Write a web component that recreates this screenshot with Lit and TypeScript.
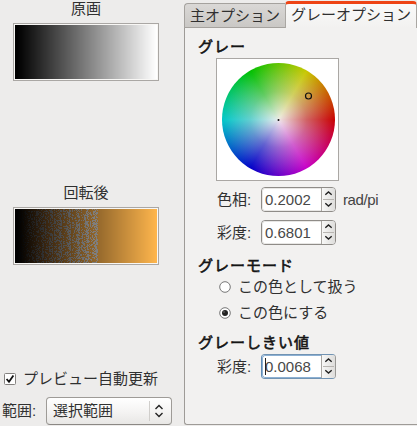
import { LitElement, html, svg, css } from "lit";
import { customElement, property } from "lit/decorators.js";

@customElement("spin-box")
class SpinBox extends LitElement {
  @property() value = "";
  @property({ type: Boolean, reflect: true }) active = false;

  static styles = css`
    :host { display: flex; box-sizing: border-box; width: 75px; height: 25px; border: 1px solid #8f8c88; border-radius: 4px; overflow: hidden; background: #fff; }
    .value { flex: 1; display: flex; align-items: center; font-size: 15px; color: #484848; border: 1px solid #e8e7e5; border-right: 0; border-radius: 3px 0 0 3px; padding-left: 2px; }
    .steps { width: 13px; border-left: 1px solid #a9a6a2; background: linear-gradient(90deg, #f8f8f7, #dedddb); }
    svg { display: block; }
    :host([active]) { border-color: #7193b3 #9a9996 #7193b3 #5e8ab5; }
    :host([active]) .value { border: 1px solid #8cb0d3; border-right: 0; position: relative; }
    .caret { position: absolute; left: 2px; top: 2px; width: 1px; height: 17px; background: #222; }
  `;

  render() {
    return html`
      <div class="value">${this.active ? html`<i class="caret"></i>` : ""}${this.value}</div>
      <div class="steps">
        <svg width="13" height="23" viewBox="0 0 13 23" fill="none">
          <path d="M1 11.5H12" stroke="#b8b5b1" />
          <path d="M3.3 6.8L6.5 3.9L9.7 6.8M3.3 15.2L6.5 18.1L9.7 15.2" stroke="#222" stroke-width="1.4" />
        </svg>
      </div>`;
  }
}

@customElement("gradient-preview")
class GradientPreview extends LitElement {
  @property({ type: Boolean }) rotated = false;

  static styles = css`
    :host { display: block; box-sizing: border-box; width: 146px; height: 58px; border: 1px solid #aaa7a4; padding: 1px; background: #f8f7f5; }
    canvas { display: block; width: 142px; height: 54px; }
  `;

  firstUpdated() {
    const canvas = this.renderRoot.querySelector("canvas")!;
    const ctx = canvas.getContext("2d")!;
    const image = ctx.createImageData(142, 54);
    let seed = 7321;
    const random = () => {
      seed = (seed * 1103515245 + 12345) % 2147483648;
      return seed / 2147483648;
    };
    for (let x = 0; x < 142; x++) {
      const v = Math.max(0, (x - 2) / 139) * 255;
      // Dithered greys fall in and out of the threshold in vertical bands.
      const share = x % 9 === 2 ? 0.12 : x < 20 ? 0.25 : 0.46 + 0.16 * Math.sin(x * 0.72);
      for (let y = 0; y < 54; y++) {
        const grey = !this.rotated || (x < 83 && random() < share);
        const n = this.rotated && grey ? Math.min(v * 0.85 + 8, 126) * Math.min(1, x / 14) : v;
        const rgb = grey ? [n, n, n] : [v * 0.97 + 6 * Math.min(1, x / 30), v * 0.71, v * 0.3];
        image.data.set([rgb[0], rgb[1], rgb[2], 255], (y * 142 + x) * 4);
      }
    }
    ctx.putImageData(image, 0, 0);
  }

  render() {
    return html`<canvas width="142" height="54"></canvas>`;
  }
}

@customElement("app-root")
class AppRoot extends LitElement {
  static styles = css`
    :host { display: flex; box-sizing: border-box; width: 417px; height: 426px; overflow: hidden; background: #edeceb; color: #303030; font: 15px/20px "Liberation Sans", "Noto Sans CJK JP", sans-serif; white-space: nowrap; }
    .side { width: 184px; flex: none; display: flex; flex-direction: column; }
    .figure { width: 146px; margin-left: 13px; display: flex; flex-direction: column; align-items: center; height: 184px; }
    .figure gradient-preview { margin-top: 5px; }
    .figure .caption { height: 18px; line-height: 18px; }
    .auto { display: flex; align-items: center; height: 20px; gap: 7px; padding-left: 4px; margin-top: 1px; }
    .range { display: flex; align-items: center; gap: 11px; padding-left: 2px; margin-top: 8px; }
    .range .name { width: 33px; }
    .combo { display: flex; align-items: center; box-sizing: border-box; width: 126px; height: 28px; border: 1px solid #9e9b97; border-bottom-color: #8b8884; border-radius: 4px; background: linear-gradient(#fff, #f4f3f2 55%, #e8e7e5); padding-left: 6px; }
    .combo .choice { flex: 1; }
    .combo .arrows { border-left: 1px solid #d0cecb; width: 21px; height: 20px; }
    svg { display: block; }
    .book { flex: 1; min-width: 0; display: flex; flex-direction: column; }
    .tabs { display: flex; align-items: flex-end; height: 28px; }
    .tab { box-sizing: border-box; width: 101px; height: 25px; border: 1px solid #a5a29e; border-right: 0; border-radius: 4px 0 0 0; background: linear-gradient(#dad8d6, #cac8c5); padding-left: 5px; line-height: 23px; }
    .tab.on { width: 132px; height: 27px; border: 1px solid #aaa7a3; border-top: 3px solid #ee4415; border-bottom: 0; border-radius: 4px 4px 0 0; background: linear-gradient(#fafaf9, #f2f1f0); padding-left: 5px; line-height: 21px; }
    .page { box-sizing: border-box; height: 397px; border-left: 1px solid #9e9b97; border-bottom: 1px solid #9e9b97; border-radius: 0 0 0 3px; background: #f2f1f0; padding: 9px 0 0 13px; }
    .heading { height: 20px; letter-spacing: 1px; color: #151515; -webkit-text-stroke: 0.6px #151515; }
    .wheel { box-sizing: border-box; width: 123px; height: 123px; margin: 1px 0 0 18px; border: 1px solid #aaa7a4; background: #fff; padding: 4px 4px 3px 5px; }
    .disc { position: relative; width: 113px; height: 113px; border-radius: 50%; background: radial-gradient(circle closest-side, rgba(240, 238, 238, 0.97), rgba(218, 218, 218, 0.45) 50%, rgba(200, 200, 200, 0) 100%), conic-gradient(from 90deg, #c80000, #c800c8 60deg, #0000c8 120deg, #00c8c8 180deg, #00c000 240deg, #c8c800 300deg, #c80000); }
    .disc svg { position: absolute; inset: 0; }
    .field { display: flex; align-items: center; margin-left: 19px; height: 25px; }
    .field .name { width: 44px; }
    .unit { margin-left: 7px; letter-spacing: -0.4px; color: #444; }
    .hue { margin-top: 6px; }
    .chroma { margin-top: 8px; margin-bottom: 11px; }
    .option { display: flex; align-items: center; gap: 7px; margin-left: 21px; height: 26px; }
    .first { height: 21px; }
    .second { height: 31px; }
    .threshold { margin-top: 5px; }
    .limit { margin-top: 1px; }
  `;

  radio(on: boolean) {
    return html`<svg width="12" height="12" viewBox="0 0 12 12">
      <circle cx="6" cy="6" r="5.3" fill="#fff" stroke="#777" />
      ${on ? svg`<circle cx="6" cy="6" r="3" fill="#222" /><circle cx="5" cy="5" r=".8" fill="#777" />` : ""}
    </svg>`;
  }

  render() {
    return html`
      <div class="side">
        <div class="figure"><div class="caption">原画</div><gradient-preview></gradient-preview></div>
        <div class="figure"><div class="caption">回転後</div><gradient-preview rotated></gradient-preview></div>
        <div class="auto">
          <svg width="12" height="12" viewBox="0 0 12 12">
            <rect x=".5" y=".5" width="11" height="11" rx="1" fill="#fff" stroke="#858280" />
            <path d="M2.6 6L5 8.8L9.4 2.6" fill="none" stroke="#111" stroke-width="1.8" />
          </svg>
          <span>プレビュー自動更新</span>
        </div>
        <div class="range">
          <span class="name">範囲:</span>
          <div class="combo">
            <span class="choice">選択範囲</span>
            <svg class="arrows" width="21" height="20" viewBox="0 0 21 20" fill="none">
              <path d="M5.5 8L9 4.6L12.5 8M5.5 12L9 15.4L12.5 12" stroke="#222" stroke-width="1.4" />
            </svg>
          </div>
        </div>
      </div>
      <div class="book">
        <div class="tabs"><div class="tab">主オプション</div><div class="tab on">グレーオプション</div></div>
        <div class="page">
          <div class="heading">グレー</div>
          <div class="wheel">
            <div class="disc">
              <svg width="113" height="113" viewBox="0 0 113 113">
                <circle cx="86.5" cy="33" r="3" fill="none" stroke="#111" stroke-width="1.2" />
                <circle cx="56.5" cy="57" r="1" fill="#111" />
              </svg>
            </div>
          </div>
          <div class="field hue"><span class="name">色相:</span><spin-box value="0.2002"></spin-box><span class="unit">rad/pi</span></div>
          <div class="field chroma"><span class="name">彩度:</span><spin-box value="0.6801"></spin-box></div>
          <div class="heading">グレーモード</div>
          <div class="option first">${this.radio(false)}<span>この色として扱う</span></div>
          <div class="option second">${this.radio(true)}<span>この色にする</span></div>
          <div class="heading threshold">グレーしきい値</div>
          <div class="field limit"><span class="name">彩度:</span><spin-box value="0.0068" active></spin-box></div>
        </div>
      </div>`;
  }
}
